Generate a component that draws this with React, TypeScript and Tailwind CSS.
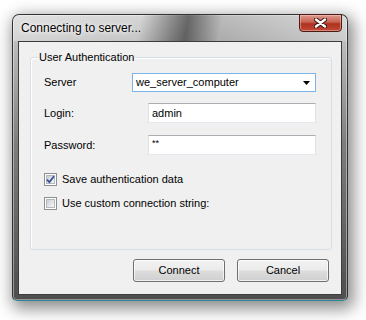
function CloseGlyph() {
  return (
    <svg width="13" height="10" viewBox="0 0 13 10">
      <path d="M2 1.5 L11 8.5 M11 1.5 L2 8.5" stroke="#3a1410" strokeWidth="4.4" strokeLinecap="round" />
      <path d="M2 1.5 L11 8.5 M11 1.5 L2 8.5" stroke="#ffffff" strokeWidth="2.4" strokeLinecap="round" />
    </svg>
  );
}

function Checkbox({ checked }: { checked?: boolean }) {
  return (
    <span className="flex h-[13px] w-[13px] shrink-0 items-center justify-center border border-[#8e8f8f] bg-white">
      <span className="flex h-[9px] w-[9px] items-center justify-center border border-[#b3b8bd] bg-[linear-gradient(135deg,#cbcfd5,#f6f6f6)]">
        {checked && (
          <svg width="9" height="9" viewBox="0 0 9 9" className="overflow-visible">
            <path d="M1 4.6 L3.4 7.2 L8 1.2" fill="none" stroke="#34509a" strokeWidth="1.8" />
          </svg>
        )}
      </span>
    </span>
  );
}

function Field({ value, small }: { value: string; small?: boolean }) {
  return (
    <div
      className={`flex h-[20px] w-[168px] border border-[#dbdfe6] border-t-[#abadb3] border-b-[#e3e9ef] bg-white pl-[3px] ${
        small ? "items-start pt-[1px] text-[9px]" : "items-center"
      }`}
    >
      {value}
    </div>
  );
}

function Button({ label }: { label: string }) {
  return (
    <div className="flex h-[23px] w-[92px] items-center justify-center rounded-[3px] border border-[#707070] bg-[linear-gradient(to_bottom,#f2f2f2_0%,#ebebeb_48%,#dddddd_52%,#cfcfcf_100%)] shadow-[inset_0_0_0_1px_rgba(255,255,255,0.7)]">
      {label}
    </div>
  );
}

export default function App() {
  return (
    <div className="h-[320px] w-[366px] overflow-hidden bg-white pl-[12px] pt-[14px] font-['Liberation_Sans',Arial,sans-serif] text-[11px] text-black">
      <div className="flex h-[287px] w-[336px] flex-col rounded-t-[7px] rounded-b-[5px] border border-[#333333] border-b-[#2b8597] bg-[linear-gradient(to_bottom,#d2d2d2_0%,#b8b8b8_12%,#7e7e7e_45%,#4e4e4e_100%)] shadow-[3px_5px_16px_3px_rgba(0,0,0,0.45),inset_0_0_0_1px_rgba(255,255,255,0.4)]">
        {/* title bar */}
        <div className="flex h-[26px] items-start justify-between rounded-t-[6px] bg-[linear-gradient(100deg,rgba(255,255,255,0.35)_0%,rgba(255,255,255,0.1)_38%,rgba(0,0,0,0.5)_52%,rgba(0,0,0,0.1)_62%,rgba(255,255,255,0.2)_100%)] pl-[8px] pr-[5px]">
          <span className="mt-[6px] text-[12px] leading-[14px] [text-shadow:0_0_6px_#fff,0_0_3px_#fff]">
            Connecting to server...
          </span>
          <div className="-mt-[1px] flex h-[18px] w-[43px] items-center justify-center rounded-b-[4px] border border-[#4a1a14] bg-[linear-gradient(to_bottom,#dc9a8f_0%,#c8604f_45%,#ad3120_55%,#c24a35_100%)] shadow-[inset_0_0_0_1px_rgba(255,210,200,0.45)]">
            <CloseGlyph />
          </div>
        </div>

        {/* client area */}
        <div className="mx-[5px] flex flex-1 flex-col border border-[#3c3c3c] bg-[#f0f0f0]">
          <div className="relative ml-[11px] mt-[15px] h-[193px] w-[302px] rounded-[3px] border border-[#d5dfe5] shadow-[inset_1px_1px_0_#fff]">
            <span className="absolute -top-[7px] left-[7px] bg-[#f0f0f0] px-[1px] leading-[13px]">
              User Authentication
            </span>

            <div className="flex flex-col pl-[13px] pt-[15px]">
              <div className="flex h-[19px] items-center">
                <span className="w-[88px]">Server</span>
                <div className="flex h-[19px] w-[184px] items-center justify-between border border-[#7eb4ea] bg-white pl-[3px] pr-[5px]">
                  <span>we_server_computer</span>
                  <svg width="7" height="4" viewBox="0 0 7 4">
                    <path d="M0 0 H7 L3.5 4 Z" fill="#000" />
                  </svg>
                </div>
              </div>

              <div className="mt-[11px] flex items-center">
                <span className="w-[104px]">Login:</span>
                <Field value="admin" />
              </div>

              <div className="mt-[12px] flex items-center">
                <span className="w-[104px]">Password:</span>
                <Field value="**" small />
              </div>

              <div className="mt-[18px] flex h-[13px] items-center gap-[5px]">
                <Checkbox checked />
                <span>Save authentication data</span>
              </div>

              <div className="mt-[11px] flex h-[13px] items-center gap-[5px]">
                <Checkbox />
                <span>Use custom connection string:</span>
              </div>
            </div>
          </div>

          <div className="mr-[12px] mt-[9px] flex justify-end gap-[12px]">
            <Button label="Connect" />
            <Button label="Cancel" />
          </div>
        </div>

        <div className="h-[5px]" />
      </div>
    </div>
  );
}
